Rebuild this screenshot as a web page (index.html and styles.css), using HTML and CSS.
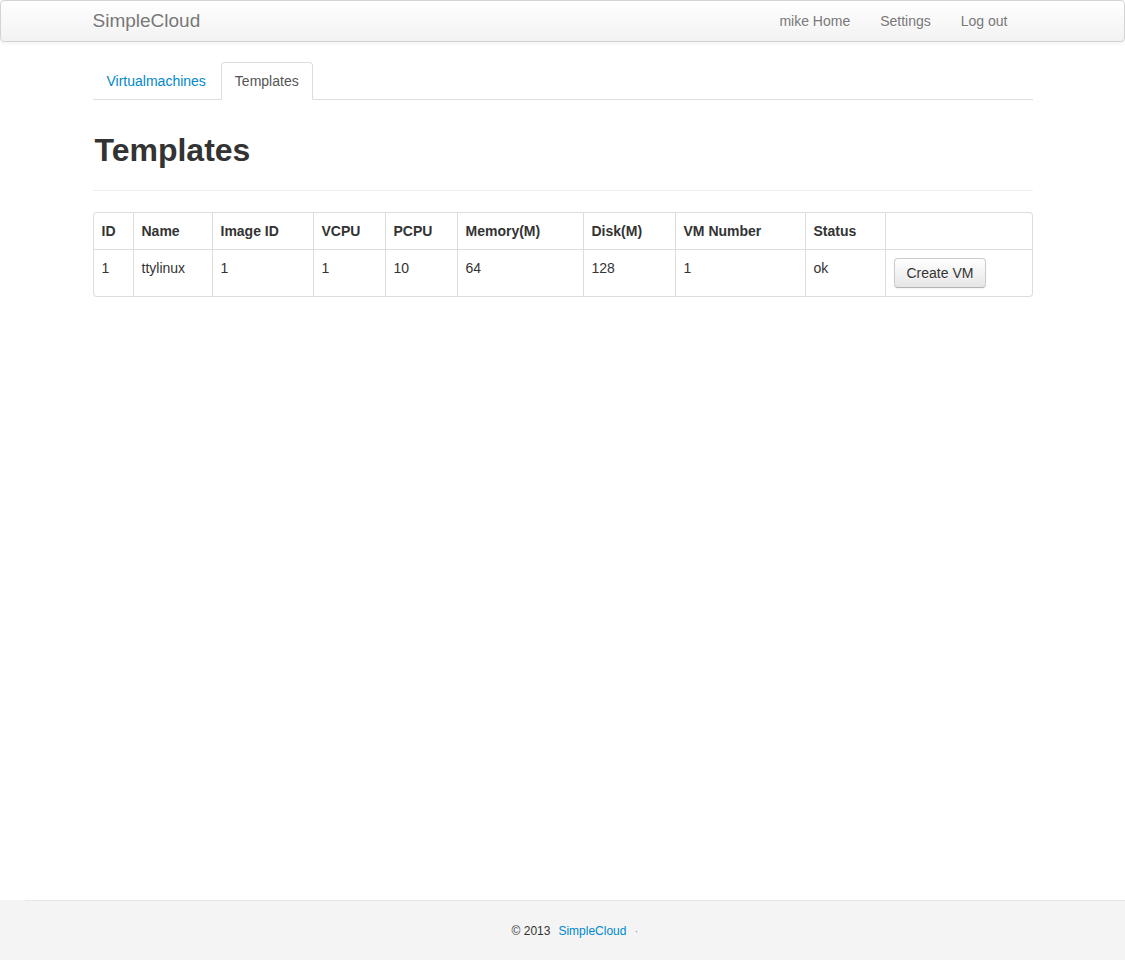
FILE: index.html
```html
<!DOCTYPE html>
<html lang="en">
<head>
  <meta charset="utf-8">
  <meta name="viewport" content="width=device-width, initial-scale=1">
  <title>SimpleCloud - Templates</title>
  <link rel="stylesheet" href="styles.css">
</head>
<body>
  <header class="navbar">
    <div class="container navbar-inner">
      <a class="brand" href="#">SimpleCloud</a>
      <nav class="nav">
        <a href="#">mike Home</a>
        <a href="#">Settings</a>
        <a href="#">Log out</a>
      </nav>
    </div>
  </header>

  <main class="container content">
    <nav class="tabs">
      <a class="tab" href="#">Virtualmachines</a>
      <a class="tab tab-active" href="#" aria-current="page">Templates</a>
    </nav>

    <h1 class="page-title">Templates</h1>

    <table class="table">
      <colgroup>
        <col class="col-id">
        <col class="col-name">
        <col class="col-image">
        <col class="col-cpu">
        <col class="col-cpu">
        <col class="col-memory">
        <col class="col-disk">
        <col class="col-number">
        <col class="col-status">
        <col>
      </colgroup>
      <thead>
        <tr>
          <th>ID</th>
          <th>Name</th>
          <th>Image ID</th>
          <th>VCPU</th>
          <th>PCPU</th>
          <th>Memory(M)</th>
          <th>Disk(M)</th>
          <th>VM Number</th>
          <th>Status</th>
          <th></th>
        </tr>
      </thead>
      <tbody>
        <tr>
          <td>1</td>
          <td>ttylinux</td>
          <td>1</td>
          <td>1</td>
          <td>10</td>
          <td>64</td>
          <td>128</td>
          <td>1</td>
          <td>ok</td>
          <td><button class="btn" type="button">Create VM</button></td>
        </tr>
      </tbody>
    </table>
  </main>

  <footer class="footer">
    <div class="footer-links">
      <span>© 2013</span>
      <a href="#">SimpleCloud</a>
      <span class="muted">·</span>
    </div>
  </footer>
</body>
</html>
```
FILE: styles.css
```css
* {
  box-sizing: border-box;
}

body {
  display: flex;
  flex-direction: column;
  min-height: 100vh;
  margin: 0;
  background: #fff;
  color: #333;
  font: 14px/20px "Liberation Sans", Arial, sans-serif;
}

a {
  color: #08c;
  text-decoration: none;
}

.container {
  width: 100%;
  max-width: 940px;
  margin: 0 auto;
}

.navbar {
  border: 1px solid #d4d4d4;
  border-radius: 4px;
  background: linear-gradient(#fff, #f2f2f2);
  box-shadow: 0 1px 4px rgba(0, 0, 0, 0.065);
}

.navbar-inner {
  display: flex;
  justify-content: space-between;
}

.brand {
  padding: 10px 0;
  color: #777;
  font-size: 19px;
  text-shadow: 0 1px 0 #fff;
}

.nav {
  display: flex;
  padding-right: 10px;
}

.nav a {
  padding: 10px 15px;
  color: #777;
  text-shadow: 0 1px 0 #fff;
}

.content {
  flex: 1;
  padding-top: 20px;
}

.tabs {
  display: flex;
  gap: 1px;
  border-bottom: 1px solid #ddd;
}

.tab {
  margin-bottom: -1px;
  padding: 8px 13px;
  border: 1px solid transparent;
  border-radius: 4px 4px 0 0;
}

.tab-active {
  border-color: #ddd #ddd #fff;
  background: #fff;
  color: #555;
}

.page-title {
  margin: 30px 0 21px;
  padding: 0 2px 20px;
  border-bottom: 1px solid #eee;
  font-size: 32px;
  line-height: 40px;
}

.table {
  width: 100%;
  table-layout: fixed;
  border: 1px solid #ddd;
  border-left: 0;
  border-radius: 4px;
  border-spacing: 0;
}

.table th,
.table td {
  padding: 8px;
  border-left: 1px solid #ddd;
  text-align: left;
  vertical-align: top;
}

.table td {
  border-top: 1px solid #ddd;
}

.table th:first-child {
  border-top-left-radius: 4px;
}

.table td:first-child {
  border-bottom-left-radius: 4px;
}

.col-id {
  width: 40px;
}

.col-name {
  width: 79px;
}

.col-image {
  width: 101px;
}

.col-cpu {
  width: 72px;
}

.col-memory {
  width: 126px;
}

.col-disk {
  width: 92px;
}

.col-number {
  width: 130px;
}

.col-status {
  width: 80px;
}

.btn {
  display: block;
  padding: 4px 12px;
  border: 1px solid #ccc;
  border-bottom-color: #b3b3b3;
  border-radius: 4px;
  background: linear-gradient(#fff, #e6e6e6);
  box-shadow: inset 0 1px 0 rgba(255, 255, 255, 0.2), 0 1px 2px rgba(0, 0, 0, 0.05);
  color: #333;
  font: inherit;
  text-shadow: 0 1px 1px rgba(255, 255, 255, 0.75);
}

.footer {
  padding-left: 25px;
  background: #f4f4f4;
  font-size: 12px;
}

.footer-links {
  display: flex;
  justify-content: center;
  gap: 8px;
  padding: 20px 0 19px;
  border-top: 1px solid #e5e5e5;
}

.muted {
  color: #999;
}
```
